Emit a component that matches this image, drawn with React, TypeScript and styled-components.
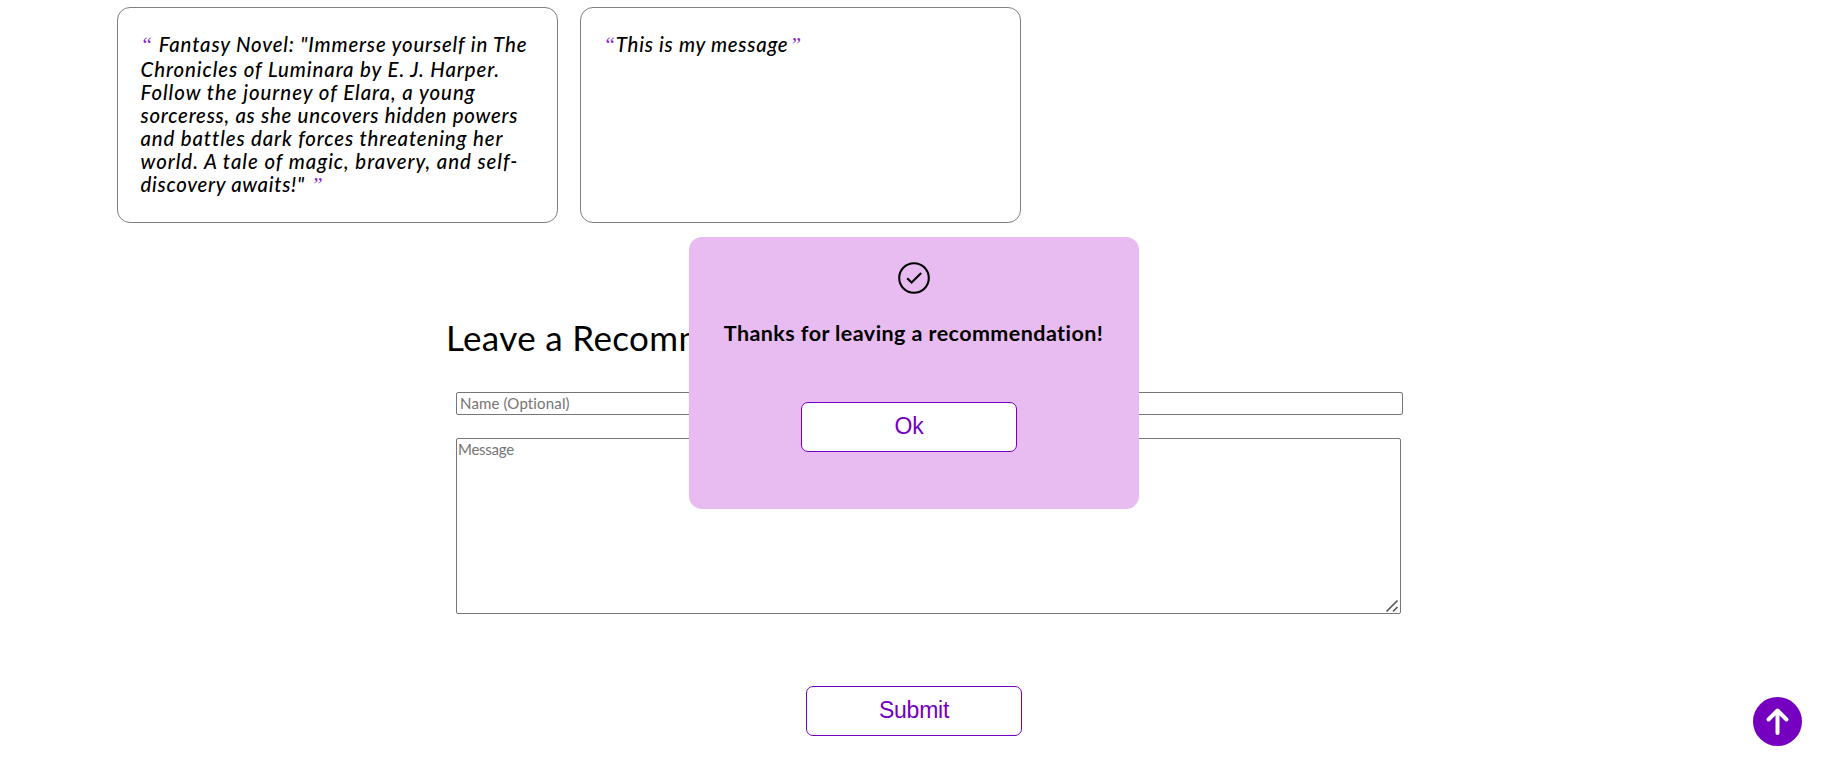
import React from "react";
import styled, { createGlobalStyle } from "styled-components";

const GlobalStyle = createGlobalStyle`
  * { box-sizing: border-box; }
  body {
    margin: 0;
    background: #fff;
    color: #000;
    font-family: "Trebuchet MS", Lato, sans-serif;
    overflow: hidden;
  }
`;

const Page = styled.main`
  height: 759px;
  padding-top: 7px;
  overflow: hidden;
`;

const CardRow = styled.section`
  display: flex;
  gap: 22px;
  padding-left: 117px;
`;

const Card = styled.article`
  width: 441px;
  height: 216px;
  padding: 25px 0 0 22.5px;
  border: 1px solid #808080;
  border-radius: 13px;
`;

const Quote = styled.p`
  margin: 0;
  font-size: 20.4px;
  font-style: italic;
  font-weight: 500;
  line-height: 23px;
  white-space: nowrap;
`;

const Line = styled.span<{ $spacing: number; $height?: number }>`
  display: block;
  height: ${(p) => p.$height ?? 23.1}px;
  letter-spacing: ${(p) => p.$spacing}px;
`;

const Mark = styled.span<{ $before?: number; $after?: number }>`
  display: inline-block;
  margin: 0 ${(p) => p.$after ?? 0}px 0 ${(p) => p.$before ?? 0}px;
  color: #8a26c9;
  font-family: "Liberation Serif", serif;
  font-weight: 400;
  font-size: 21px;
  letter-spacing: 0.6px;
  line-height: 20px;
`;

const Form = styled.form`
  display: flex;
  flex-direction: column;
  align-items: flex-start;
  width: 957px;
  margin: 91px 0 0 446px;
`;

const Title = styled.h2`
  margin: 0;
  height: 46px;
  font-size: 35px;
  font-weight: 400;
  line-height: 46px;
  letter-spacing: 0.35px;
  white-space: nowrap;
`;

const NameInput = styled.input`
  width: 947px;
  height: 23px;
  margin: 32px 0 0 10px;
  padding: 0 3px 2px;
  border: 1px solid #767676;
  border-radius: 2px;
  font: 400 15px "Trebuchet MS", Lato, sans-serif;
  letter-spacing: 0.15px;
  &::placeholder { color: #757575; }
`;

const MessageField = styled.div`
  position: relative;
  width: 945px;
  height: 176px;
  margin: 23px 0 0 10px;
`;

const MessageInput = styled.textarea`
  display: block;
  width: 100%;
  height: 100%;
  padding: 1px 2px 2px 1px;
  border: 1px solid #767676;
  border-radius: 2px;
  resize: none;
  font: 400 15px "Trebuchet MS", Lato, sans-serif;
  letter-spacing: -0.25px;
  &::placeholder { color: #757575; }
`;

const ResizeGrip = styled.svg`
  position: absolute;
  right: 2px;
  bottom: 1px;
`;

const Button = styled.button`
  width: 216px;
  height: 50px;
  padding: 0 0 1px;
  border: 1px solid #7500bf;
  border-radius: 7px;
  background: #fff;
  color: #7500bf;
  font: 400 23px "Liberation Sans", Arial, sans-serif;
  letter-spacing: -0.25px;
`;

const SubmitButton = styled(Button)`
  margin: 72px 0 0 360px;
`;

const Modal = styled.div`
  position: fixed;
  top: 237px;
  left: 689px;
  display: flex;
  flex-direction: column;
  align-items: center;
  width: 450px;
  height: 272px;
  padding-top: 23px;
  border-radius: 13px;
  background: #e8bcf0;
`;

const ModalText = styled.p`
  margin: 22px 1px 0 0;
  font-size: 21.5px;
  font-weight: 700;
  line-height: 30px;
  letter-spacing: 0.43px;
  white-space: nowrap;
`;

const OkButton = styled(Button)`
  margin: 54px 10px 0 0;
`;

const ScrollTop = styled.button`
  position: fixed;
  top: 697px;
  left: 1753px;
  display: grid;
  place-items: center;
  width: 49px;
  height: 49px;
  padding: 0;
  border: 0;
  border-radius: 50%;
  background: #7500bf;
`;

export default function App() {
  return (
    <Page>
      <GlobalStyle />
      <CardRow>
        <Card>
          <Quote>
            <Line $spacing={0.84} $height={24.6}><Mark $after={6}>“</Mark>Fantasy Novel: "Immerse yourself in The</Line>
            <Line $spacing={0.92}>Chronicles of Luminara by E. J. Harper.</Line>
            <Line $spacing={0.98}>Follow the journey of Elara, a young</Line>
            <Line $spacing={0.76}>sorceress, as she uncovers hidden powers</Line>
            <Line $spacing={0.87}>and battles dark forces threatening her</Line>
            <Line $spacing={0.97}>world. A tale of magic, bravery, and self-</Line>
            <Line $spacing={0.7}>discovery awaits!"<Mark $before={6}>”</Mark></Line>
          </Quote>
        </Card>
        <Card>
          <Quote>
            <Line $spacing={0.74}><Mark>“</Mark>This is my message<Mark $before={1}>”</Mark></Line>
          </Quote>
        </Card>
      </CardRow>

      <Form onSubmit={(e) => e.preventDefault()}>
        <Title>Leave a Recommendation</Title>
        <NameInput placeholder="Name (Optional)" />
        <MessageField>
          <MessageInput placeholder="Message" />
          <ResizeGrip width="14" height="14" viewBox="0 0 14 14" stroke="#555" strokeWidth="1.6">
            <path d="M1.5 12.5 12.5 1.5M8 12.5 12.5 8" />
          </ResizeGrip>
        </MessageField>
        <SubmitButton type="submit">Submit</SubmitButton>
      </Form>

      <Modal role="dialog">
        <svg width="36" height="36" viewBox="0 0 36 36" fill="none" stroke="#000" strokeWidth="2.1">
          <circle cx="18" cy="18" r="14.8" />
          <path d="M11.2 18.2 15.6 22.5 25.2 13" />
        </svg>
        <ModalText>Thanks for leaving a recommendation!</ModalText>
        <OkButton type="button">Ok</OkButton>
      </Modal>

      <ScrollTop type="button" aria-label="Back to top">
        <svg width="49" height="49" viewBox="0 0 49 49" fill="none" stroke="#fff" strokeWidth="4" strokeLinecap="round" strokeLinejoin="round">
          <path d="M24.5 36V13.5M15.5 22.5 24.5 13.5 33.5 22.5" />
        </svg>
      </ScrollTop>
    </Page>
  );
}
